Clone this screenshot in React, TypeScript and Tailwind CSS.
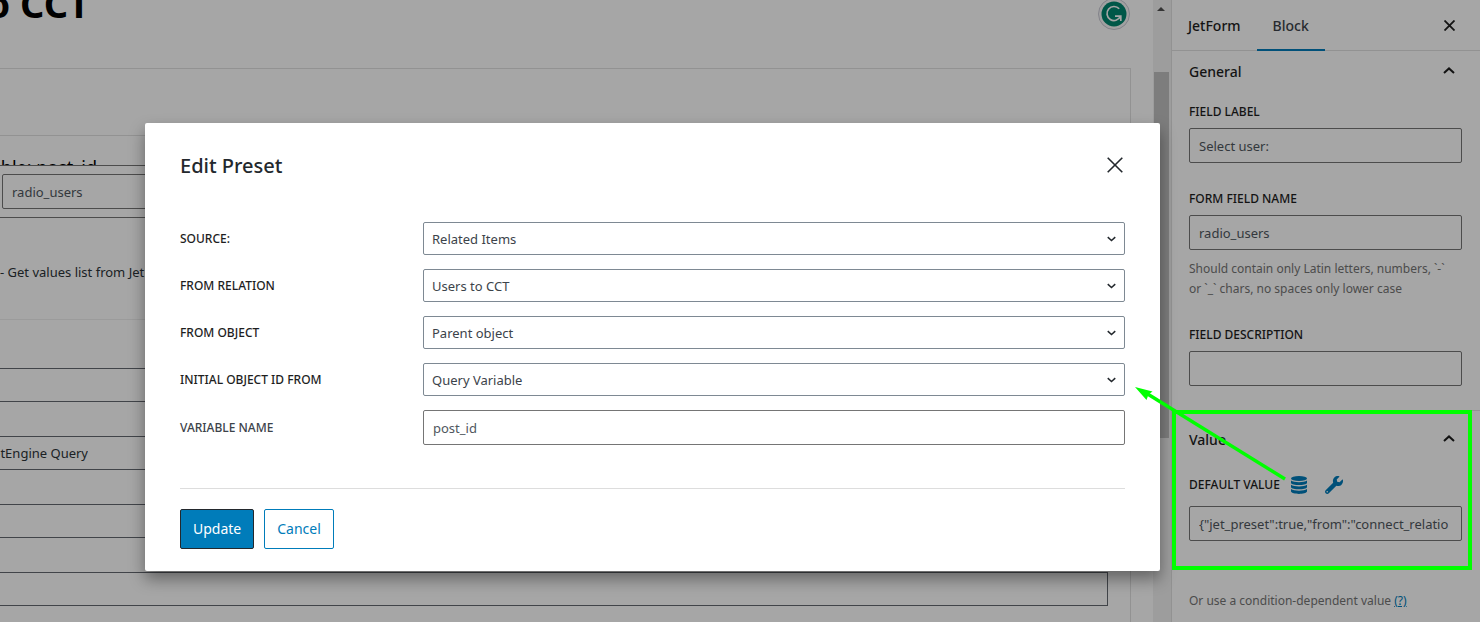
import { FaWrench } from "react-icons/fa";

const selects = [
	{ id: "source", label: "Source:", value: "Related Items" },
	{ id: "relation", label: "From relation", value: "Users to CCT" },
	{ id: "object", label: "From object", value: "Parent object" },
	{ id: "initial", label: "Initial object ID from", value: "Query Variable" },
];

const inputClass = "w-full h-[35px] px-[9px] pt-px rounded-[2px] border border-[#757575] bg-white text-[13px] text-[#50575e]";
const labelClass = "block text-xs leading-4 font-medium uppercase text-[#1e1e1e]";

function Chevron({ className }: { className: string }) {
	return (
		<svg viewBox="0 0 12 7" className={className} fill="none" stroke="currentColor" strokeWidth="2" aria-hidden="true">
			<path d="M1 6 6 1.4 11 6" />
		</svg>
	);
}

function Cross({ className, width }: { className: string; width: number }) {
	return (
		<svg viewBox="0 0 16 16" className={className} stroke="currentColor" strokeWidth={width} aria-hidden="true">
			<path d="M.7.7 15.3 15.3M15.3.7.7 15.3" />
		</svg>
	);
}

function Database() {
	return (
		<svg viewBox="0 0 16 18" className="w-4 h-[18px]" fill="currentColor" aria-hidden="true">
			<ellipse cx="8" cy="2.5" rx="8" ry="2.5" />
			<path d="M0 4.4C3 6.7 13 6.7 16 4.4V7c-1 2.7-15 2.7-16 0Z" />
			<path d="M0 8.8c3 2.3 13 2.3 16 0v2.5c-1 2.7-15 2.7-16 0Z" />
			<path d="M0 13.1c3 2.3 13 2.3 16 0v2.5c-1 3.1-15 3.1-16 0Z" />
		</svg>
	);
}

function Grammarly() {
	return (
		<div className="flex items-center justify-center w-[32px] h-[32px] rounded-full border border-[#c8c8d4] bg-[#f8f8f8]">
			<svg viewBox="0 0 26 26" className="w-[26px] h-[26px]" aria-hidden="true">
				<circle cx="13" cy="13" r="12.5" fill="#00866f" />
				<path d="M18.2 7.8a7 7 0 1 0 1.2 7.6M14 15.2h5.8V20" fill="none" stroke="#fff" strokeWidth="1.7" />
			</svg>
		</div>
	);
}

function Editor() {
	return (
		<main className="flex-1 min-w-0 overflow-hidden pr-[22px]">
			<div className="flex justify-between h-[68px]">
				<div className="flex items-end justify-end w-[90px] h-[26px] overflow-hidden">
					<h1 className="shrink-0 text-[38px] leading-[46px] font-bold whitespace-nowrap text-black">Users to CCT</h1>
				</div>
				<div className="-mt-[2px] mr-px">
					<Grammarly />
				</div>
			</div>
			<div className="border-t border-r border-[#e0e0e0] pt-[66px] h-[600px]">
				<div className="border-t border-[#e0e0e0] h-[30px] pt-[19px] overflow-hidden">
					<div className="flex justify-end w-[97px]">
						<span className="shrink-0 text-lg leading-6 whitespace-nowrap text-black">Variable: post_id</span>
					</div>
				</div>
				<div className="border-y border-[#757575] h-[53px] pt-2 pl-[2px] pr-[22px]">
					<input type="text" aria-label="Field name" defaultValue="radio_users" className={inputClass} />
				</div>
				<p className="h-[102px] pt-[42px] border-b border-[#efefef] text-[13px] leading-6 text-[#2c3338]">- Get values list from JetEngine</p>
				<div className="flex flex-col gap-[34px] pt-12 pr-[22px]">
					<div className="h-[34px] border-y border-r border-[#646970]" />
					<div className="h-[34px] border-y border-r border-[#646970]">
						<div className="flex justify-end w-[88px] overflow-hidden">
							<span className="shrink-0 text-[13px] leading-8 whitespace-nowrap text-[#2c3338]">JetEngine Query</span>
						</div>
					</div>
					<div className="h-[34px] border-y border-r border-[#646970]" />
					<div className="h-[34px] border-y border-r border-[#646970]" />
				</div>
			</div>
		</main>
	);
}

function Sidebar() {
	return (
		<aside className="w-[309px] shrink-0 border-l border-[#e0e0e0] bg-white text-[#1e1e1e]">
			<div className="flex items-center h-[51px] border-b border-[#e0e0e0]">
				<button className="h-[51px] px-4 pt-[2px] text-sm font-medium">JetForm</button>
				<button className="h-[51px] px-4 pt-1 text-sm font-medium text-[#3c434a] border-b-2 border-[#007cba]">Block</button>
				<button aria-label="Close settings" className="ml-auto mr-[25px]">
					<Cross className="w-[11px] h-[11px]" width={2.6} />
				</button>
			</div>
			<section className="h-[360px] pl-[17px] pr-[18px] border-b border-[#e0e0e0]">
				<button className="flex items-center justify-between w-full h-[42px] pr-[7px] text-sm font-medium">
					General
					<Chevron className="w-3 h-[7px] mb-1" />
				</button>
				<label htmlFor="field-label" className={labelClass + " mt-[11px]"}>Field label</label>
				<input id="field-label" type="text" defaultValue="Select user:" className={inputClass + " mt-2"} />
				<label htmlFor="field-name" className={labelClass + " mt-7"}>Form field name</label>
				<input id="field-name" type="text" defaultValue="radio_users" className={inputClass + " mt-2"} />
				<p className="mt-[9px] pr-2 text-xs leading-5 text-[#757575]">Should contain only Latin letters, numbers, `-` or `_` chars, no spaces only lower case</p>
				<label htmlFor="field-description" className={labelClass + " mt-7"}>Field description</label>
				<input id="field-description" type="text" className={inputClass + " mt-2"} />
			</section>
			<section className="pl-[17px] pr-[18px] pt-2">
				<button className="flex items-center justify-between w-full h-[42px] pr-[7px] text-sm font-medium">
					Value
					<Chevron className="w-3 h-[7px] mb-1" />
				</button>
				<div className="flex items-center h-[18px] mt-[15px] text-[#007cba]">
					<label htmlFor="default-value" className={labelClass}>Default value</label>
					<button aria-label="Edit preset" className="ml-[11px]"><Database /></button>
					<button aria-label="Edit macros" className="ml-[18px]"><FaWrench size={18} /></button>
				</div>
				<input id="default-value" type="text" defaultValue={'{"jet_preset":true,"from":"connect_relatio'} className={inputClass + " mt-3"} />
				<p className="mt-[50px] text-xs leading-5 text-[#757575]">
					Or use a condition-dependent value <a href="#condition" className="underline text-[#007cba]">(?)</a>
				</p>
			</section>
		</aside>
	);
}

function PresetModal() {
	return (
		<div role="dialog" aria-label="Edit Preset" className="w-full h-fit px-[35px] pt-6 pb-[22px] rounded-[2px] bg-white shadow-[0_8px_16px_rgba(0,0,0,0.4)]">
			<header className="flex items-center justify-between h-9">
				<h2 className="pt-[2px] text-xl font-medium text-[#23282d]">Edit Preset</h2>
				<button aria-label="Close" className="mr-[2px] text-[#23282d]">
					<Cross className="w-4 h-4" width={1.6} />
				</button>
			</header>
			<div className="flex flex-col gap-[14px] mt-[39px]">
				{selects.map((item) => (
					<div key={item.id} className="flex items-center">
						<label htmlFor={item.id} className={labelClass + " w-[243px] shrink-0"}>{item.label}</label>
						<div className="relative flex-1">
							<select id={item.id} className="block w-full h-[33px] px-2 pt-[3px] appearance-none rounded-[2px] border border-[#7e8993] bg-white text-[13px] text-[#3c434a]">
								<option>{item.value}</option>
							</select>
							<Chevron className="absolute right-[9px] top-[14px] w-[9px] h-[6px] rotate-180 pointer-events-none text-[#23282d]" />
						</div>
					</div>
				))}
				<div className="flex items-center">
					<label htmlFor="variable" className={labelClass + " w-[243px] shrink-0 text-[#3c434a]"}>Variable name</label>
					<input id="variable" type="text" defaultValue="post_id" className={inputClass} />
				</div>
			</div>
			<footer className="flex gap-[10px] mt-[43px] pt-5 border-t border-[#ddd]">
				<button className="h-10 px-3 rounded-[2px] border border-[#23282d] bg-[#007cba] text-sm text-white">Update</button>
				<button className="h-10 px-3 rounded-[2px] border border-[#007cba] bg-white text-sm text-[#007cba]">Cancel</button>
			</footer>
		</div>
	);
}

export default function App() {
	return (
		<div className="relative flex h-screen overflow-hidden bg-white font-['Noto_Sans',sans-serif]">
			<Editor />
			<div className="flex flex-col items-center w-[18px] pr-[2px] shrink-0 bg-[#f1f1f1]">
				<svg viewBox="0 0 8 4" className="w-2 h-1 mt-[7px]" fill="#505050" aria-hidden="true">
					<path d="M4 0 8 4H0Z" />
				</svg>
				<div className="w-[15px] h-[366px] mt-[61px] bg-[#c1c1c1]" />
			</div>
			<Sidebar />
			<div className="absolute inset-0 pl-[145px] pr-[320px] pt-[123px] bg-black/35">
				<PresetModal />
			</div>
			<div className="absolute right-2 top-[410px] w-[300px] h-[160px] border-4 border-[#00ff00] pointer-events-none" />
			<svg viewBox="0 0 152 96" className="absolute right-[194px] top-[385px] w-[152px] h-[96px] pointer-events-none" aria-hidden="true">
				<path d="M12 8 151 94" stroke="#00ff00" strokeWidth="3.5" />
				<path d="M1 2 18.5 6.5 14.5 9.5 12.5 15Z" fill="#00ff00" />
			</svg>
		</div>
	);
}
